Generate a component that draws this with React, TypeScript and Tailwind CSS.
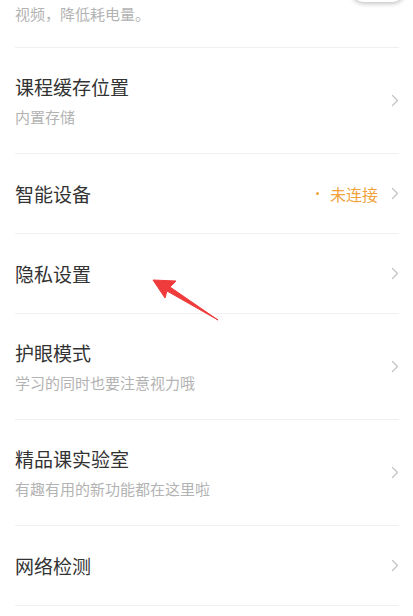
import React from "react";

const font = { fontFamily: '"Noto Sans CJK SC", "Noto Sans", sans-serif' };

function Chevron({ color = "#c4c4c4" }: { color?: string }) {
  return (
    <svg width="8" height="13" viewBox="0 0 8 13" fill="none" className="shrink-0">
      <path d="M1.5 1.5 L6.5 6.5 L1.5 11.5" stroke={color} strokeWidth="1.3" strokeLinecap="round" strokeLinejoin="round" />
    </svg>
  );
}

function Row({ title, sub, right }: { title: string; sub?: string; right?: React.ReactNode }) {
  return (
    <div className={`flex items-center justify-between border-b border-[#f0f0f0] ${sub ? "h-[106px]" : "h-[80px]"}`}>
      <div className="flex flex-col">
        <div className="text-[19px] leading-[26px] text-[#333333]">{title}</div>
        {sub && <div className="mt-[7px] text-[15px] leading-[20px] text-[#b3b3b3]">{sub}</div>}
      </div>
      <div className="flex items-center">
        {right}
        <Chevron />
      </div>
    </div>
  );
}

export default function App() {
  return (
    <div className="relative h-[616px] w-[413px] overflow-hidden bg-white" style={font}>
      <div className="pl-[15px] pr-[14px]">
        <div className="flex h-[48px] items-start justify-between border-b border-[#f0f0f0]">
          <div className="pt-[4px] text-[15px] leading-[20px] text-[#b3b3b3]">视频，降低耗电量。</div>
          <div className="-mr-[6px] -mt-[24px] h-[26px] w-[54px] rounded-full bg-white shadow-[0_2px_4px_rgba(0,0,0,0.22)]" />
        </div>
        <Row title="课程缓存位置" sub="内置存储" />
        <Row
          title="智能设备"
          right={
            <div className="mr-[13px] flex items-center text-[16px] leading-[22px] text-[#f0a23c]">
              <span className="mr-[11px] h-[3px] w-[3px] rounded-full bg-[#f0a23c]" />
              未连接
            </div>
          }
        />
        <Row title="隐私设置" />
        <Row title="护眼模式" sub="学习的同时也要注意视力哦" />
        <Row title="精品课实验室" sub="有趣有用的新功能都在这里啦" />
        <Row title="网络检测" />
      </div>
      <svg className="pointer-events-none absolute left-0 top-0" width="413" height="616" viewBox="0 0 413 616">
        <polygon
          points="153,280 176,281 170,287 218,320 167,291 165,298"
          fill="#ef3b3b"
          stroke="#ef3b3b"
          strokeWidth="1"
          strokeLinejoin="round"
        />
      </svg>
    </div>
  );
}
